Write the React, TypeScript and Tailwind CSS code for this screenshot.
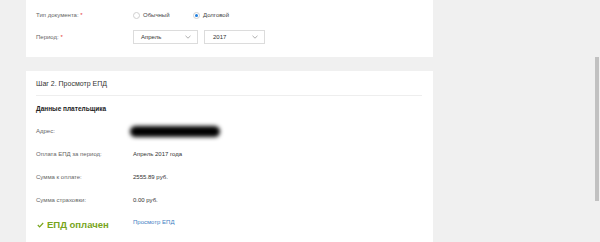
import React from "react"

const font = { fontFamily: '"Liberation Sans", Arial, sans-serif' }

function Chevron() {
  return (
    <svg width="6" height="4" viewBox="0 0 6 4" className="shrink-0">
      <polyline points="0.5,0.8 3,3.2 5.5,0.8" fill="none" stroke="#9a9a9a" strokeWidth="0.8" />
    </svg>
  )
}

function Radio({ checked, label }: { checked?: boolean; label: string }) {
  return (
    <div className="flex items-center gap-[3px]">
      <span className="w-[7px] h-[7px] rounded-full border border-[#cfcfcf] flex items-center justify-center bg-white">
        {checked && <span className="w-[3px] h-[3px] rounded-full bg-[#1e7fe0]" />}
      </span>
      <span className="text-[6px] text-[#444]">{label}</span>
    </div>
  )
}

function Select({ value, w, pl }: { value: string; w: string; pl: string }) {
  return (
    <div className={`h-[14px] border border-[#dcdcdc] bg-white flex items-center justify-between pr-[6px] ${w} ${pl}`}>
      <span className="text-[6px] text-[#333]">{value}</span>
      <Chevron />
    </div>
  )
}

function Row({ label, children }: { label: string; children: React.ReactNode }) {
  return (
    <div className="flex items-center h-[23px]">
      <div className="w-[97px] text-[6px] text-[#666]">{label}</div>
      <div className="text-[6px] text-[#333]">{children}</div>
    </div>
  )
}

export default function App() {
  return (
    <div className="w-[600px] h-[242px] bg-[#f0f0f0] relative overflow-hidden" style={font}>
      <div className="pl-[26px] w-[433px]">
        {/* step 1 tail */}
        <div className="bg-white h-[57px] px-[10px] pt-[9px]">
          <div className="flex items-center h-[12px]">
            <div className="w-[97px] text-[6px] text-[#666]">
              Тип документа: <span className="text-[#e53935]">*</span>
            </div>
            <div className="w-[60px]">
              <Radio label="Обычный" />
            </div>
            <Radio checked label="Долговой" />
          </div>
          <div className="flex items-center h-[14px] mt-[9px]">
            <div className="w-[97px] text-[6px] text-[#666]">
              Период: <span className="text-[#e53935]">*</span>
            </div>
            <Select value="Апрель" w="w-[65px]" pl="pl-[7px]" />
            <div className="w-[6px]" />
            <Select value="2017" w="w-[61px]" pl="pl-[8px]" />
          </div>
        </div>

        {/* step 2 */}
        <div className="bg-white mt-[14px] h-[200px] pl-[10px] pr-[11px] pt-[8px]">
          <div className="h-[10px] flex items-center text-[7px] text-[#333]">Шаг 2. Просмотр ЕПД</div>
          <div className="mt-[6px] border-t border-[#eeeeee]" />
          <div className="mt-[8px] h-[10px] flex items-center text-[6.5px] font-bold text-[#222]">Данные плательщика</div>
          <div className="mt-[6px]">
            <Row label="Адрес:">
              <div className="-ml-[3px] w-[90px] h-[11px] rounded-full bg-black blur-[2px]" />
            </Row>
            <Row label="Оплата ЕПД за период:">Апрель 2017 года</Row>
            <Row label="Сумма к оплате:">2555.89 руб.</Row>
            <Row label="Сумма страховки:">0.00 руб.</Row>
            <div className="flex items-center h-[26px]">
              <div className="w-[97px] flex items-center">
                <svg width="7" height="6" viewBox="0 0 7 6" className="ml-[1px] mr-[3px]">
                  <polyline points="0.8,3 2.6,4.8 6.2,1" fill="none" stroke="#78a51c" strokeWidth="1.2" />
                </svg>
                <span className="text-[9.5px] font-bold text-[#78a51c] leading-none">ЕПД оплачен</span>
              </div>
              <a className="text-[6px] text-[#3f7fc4] mb-[6px]">Просмотр ЕПД</a>
            </div>
          </div>
        </div>
      </div>

      {/* scrollbar */}
      <div className="absolute right-[1px] top-[57px] w-[4px] h-[144px] bg-[#c1c1c1]" />
    </div>
  )
}
